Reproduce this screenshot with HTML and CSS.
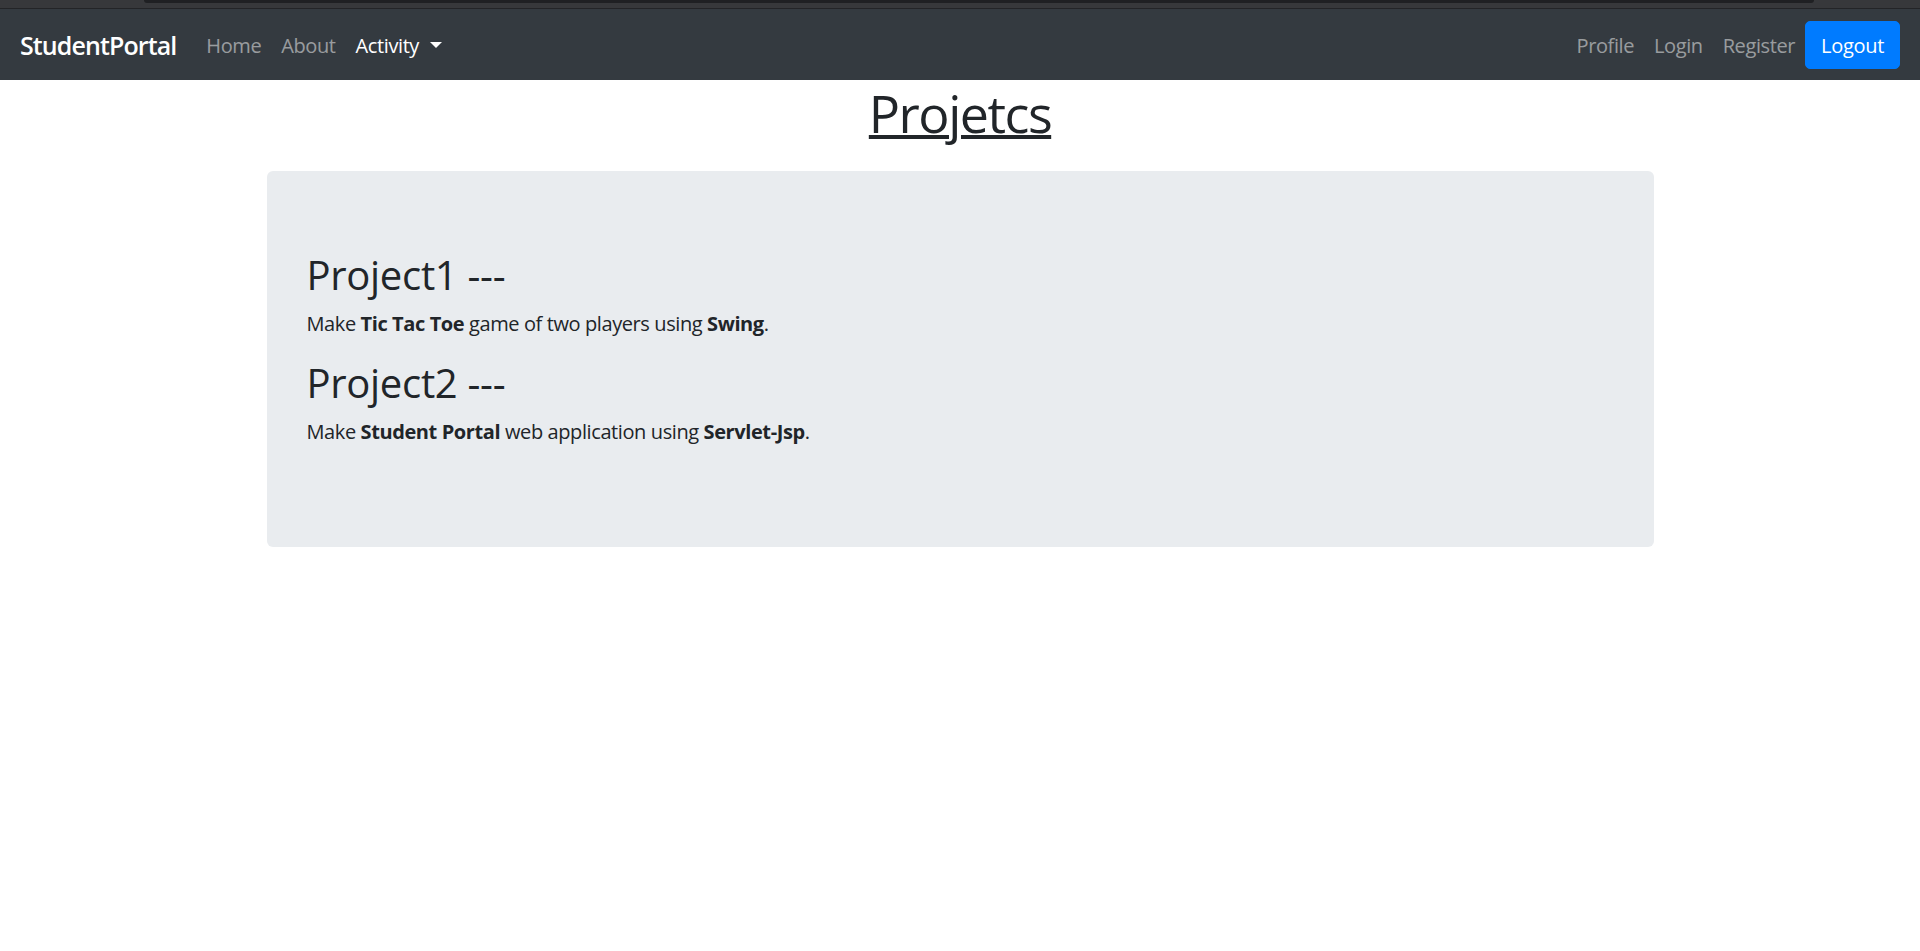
FILE: index.html
```html
<!DOCTYPE html>
<html lang="en">
<head>
<meta charset="utf-8">
<title>Projects - StudentPortal</title>
<link rel="stylesheet" href="styles.css">
</head>
<body>
<div class="chrome"><div class="chrome-tab"></div></div>
<nav class="navbar">
  <a class="brand" href="#">StudentPortal</a>
  <ul class="nav">
    <li><a class="nav-link" href="#">Home</a></li>
    <li><a class="nav-link" href="#">About</a></li>
    <li><a class="nav-link active" href="#">Activity<span class="caret"></span></a></li>
  </ul>
  <ul class="nav nav-right">
    <li><a class="nav-link" href="#">Profile</a></li>
    <li><a class="nav-link" href="#">Login</a></li>
    <li><a class="nav-link" href="#">Register</a></li>
    <li><button class="btn-logout" type="button">Logout</button></li>
  </ul>
</nav>
<main class="container">
  <h1 class="title">Projetcs</h1>
  <div class="jumbotron">
    <h2 class="proj-title">Project1 ---</h2>
    <p class="proj-text">Make <b>Tic Tac Toe</b> game of two players using <b>Swing</b>.</p>
    <h2 class="proj-title">Project2 ---</h2>
    <p class="proj-text">Make <b>Student Portal</b> web application using <b>Servlet-Jsp</b>.</p>
  </div>
</main>
</body>
</html>
```
FILE: styles.css
```css
* { box-sizing: border-box; }

html, body {
  margin: 0;
  padding: 0;
  background: #fff;
}

body {
  font-family: "Open Sans", "Noto Sans", sans-serif;
  color: #212529;
  font-size: 20px;
  line-height: 1.5;
}

.chrome {
  height: 9px;
  background: #37383b;
  border-bottom: 1px solid #232427;
  padding: 0 106px 0 144px;
}

.chrome-tab {
  height: 3px;
  background: #1f2023;
  border-radius: 0 0 5px 5px;
}

.navbar {
  display: flex;
  align-items: center;
  height: 71px;
  padding: 0 20px;
  background: #343a40;
}

.brand {
  font-size: 25px;
  font-weight: 600;
  color: #fff;
  text-decoration: none;
  margin-right: 20px;
  line-height: 37.5px;
  letter-spacing: -0.9px;
  padding-top: 2px;
}

.nav {
  display: flex;
  align-items: center;
  list-style: none;
  margin: 0;
  padding: 0;
}

.nav-right {
  margin-left: auto;
}

.nav-link {
  display: flex;
  align-items: center;
  padding: 11px 10px 9px;
  color: rgba(255, 255, 255, 0.5);
  text-decoration: none;
  font-size: 20px;
  line-height: 30px;
  letter-spacing: -0.4px;
}

.nav-link.active {
  color: #fff;
}

.caret {
  display: inline-block;
  margin-left: 11px;
  margin-top: -1px;
  width: 0;
  height: 0;
  border-top: 6px solid #fff;
  border-left: 6px solid transparent;
  border-right: 6px solid transparent;
}

.btn-logout {
  font-family: inherit;
  font-size: 20px;
  line-height: 30px;
  padding: 9px 15px 7px;
  color: #fff;
  background: #007bff;
  border: 1px solid #007bff;
  border-radius: 5px;
  letter-spacing: -0.3px;
  cursor: pointer;
}

.container {
  width: 1425px;
  margin: 0 auto;
  padding: 0 19px;
}

.title {
  margin: 0 0 27px;
  padding-top: 2px;
  text-align: center;
  font-size: 52px;
  font-weight: 500;
  line-height: 1.2;
  letter-spacing: -1.5px;
  text-decoration: underline;
  text-decoration-thickness: 4px;
  text-underline-offset: 2px;
}

.jumbotron {
  background: #e9ecef;
  border-radius: 6px;
  padding: 80px 40px;
}

.proj-title {
  margin: 0 0 10px;
  font-size: 40px;
  font-weight: 500;
  line-height: 1.2;
  letter-spacing: -0.3px;
  padding-top: 2px;
  margin-top: -2px;
}

.proj-text {
  margin: 0 0 20px;
  font-size: 20px;
  line-height: 30px;
  letter-spacing: -0.4px;
}

.proj-text b {
  font-weight: 700;
}
```
